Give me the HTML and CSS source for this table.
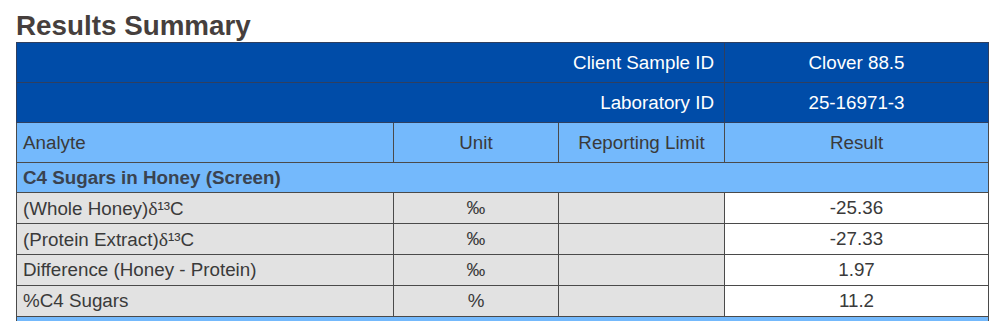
FILE: index.html
```html
<!DOCTYPE html>
<html lang="en">
<head>
<meta charset="utf-8">
<title>Results Summary</title>
<link rel="stylesheet" href="styles.css">
</head>
<body>
<h1 class="title">Results Summary</h1>
<table class="results">
  <colgroup>
    <col class="c-analyte">
    <col class="c-unit">
    <col class="c-limit">
    <col class="c-result">
  </colgroup>
  <tr class="row-dark">
    <td colspan="3" class="label">Client Sample ID</td>
    <td class="center">Clover 88.5</td>
  </tr>
  <tr class="row-dark">
    <td colspan="3" class="label">Laboratory ID</td>
    <td class="center">25-16971-3</td>
  </tr>
  <tr class="row-head">
    <td class="left">Analyte</td>
    <td class="center">Unit</td>
    <td class="center">Reporting Limit</td>
    <td class="center">Result</td>
  </tr>
  <tr class="row-section">
    <td colspan="4" class="left bold">C4 Sugars in Honey (Screen)</td>
  </tr>
  <tr class="row-data">
    <td class="left">(Whole Honey)<span class="delta">δ</span>¹³C</td>
    <td class="center">‰</td>
    <td></td>
    <td class="center result">-25.36</td>
  </tr>
  <tr class="row-data">
    <td class="left">(Protein Extract)<span class="delta">δ</span>¹³C</td>
    <td class="center">‰</td>
    <td></td>
    <td class="center result">-27.33</td>
  </tr>
  <tr class="row-data">
    <td class="left">Difference (Honey - Protein)</td>
    <td class="center">‰</td>
    <td></td>
    <td class="center result">1.97</td>
  </tr>
  <tr class="row-data">
    <td class="left">%C4 Sugars</td>
    <td class="center">%</td>
    <td></td>
    <td class="center result">11.2</td>
  </tr>
  <tr class="row-section">
    <td colspan="4" class="left bold">&nbsp;</td>
  </tr>
</table>
</body>
</html>
```

FILE: styles.css
```css
html, body {
  margin: 0;
  padding: 0;
  background: #ffffff;
}

body {
  padding: 10px 12px 0 16px;
  font-family: "Liberation Sans", Arial, sans-serif;
  overflow: hidden;
}

.title {
  margin: 0;
  font-size: 27.8px;
  font-weight: bold;
  line-height: 32px;
  color: #463f3d;
}

.results {
  border-collapse: collapse;
  width: 972px;
  table-layout: fixed;
  font-size: 18.8px;
  color: #3a3a3a;
}

.c-analyte { width: 377px; }
.c-unit { width: 165px; }
.c-limit { width: 166px; }
.c-result { width: 264px; }

.results td {
  border: 1px solid #4a4a4a;
  padding: 0 6px;
  white-space: nowrap;
  overflow: hidden;
}

.row-dark td {
  background: #004ca8;
  color: #ffffff;
  height: 39px;
  border-color: #2f3f5f;
}

.row-dark .label {
  text-align: right;
  padding-right: 10px;
}

.row-head td {
  background: #74b9fc;
  height: 39px;
}

.row-section td {
  background: #74b9fc;
  height: 29px;
}

.row-data td {
  background: #e2e2e2;
  height: 30px;
}

.row-data .result {
  background: #ffffff;
}

.left { text-align: left; }
.center { text-align: center; }
.bold { font-weight: bold; color: #3a4350; }

.delta {
  font-family: "Liberation Serif", "Times New Roman", serif;
  font-size: 1.05em;
}

.permille {
  font-size: 1.1em;
}
```
